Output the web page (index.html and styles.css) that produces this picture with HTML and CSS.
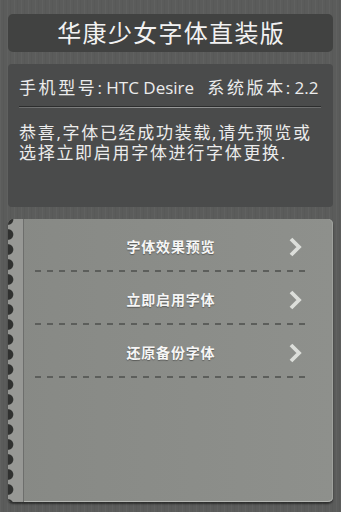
FILE: index.html
```html
<!DOCTYPE html>
<html lang="zh-CN">
<head>
<meta charset="utf-8">
<title>华康少女字体直装版</title>
<link rel="stylesheet" href="styles.css">
</head>
<body>
<div class="screen">
  <header class="title-bar">
    <h1 class="title">华康少女字体直装版</h1>
  </header>
  <section class="info">
    <p class="device"><span class="cj">手机型号</span>: HTC Desire&nbsp;&nbsp;&nbsp;<span class="cj">系统版本</span>: 2.2</p>
    <div class="divider"></div>
    <p class="message">恭喜,字体已经成功装载,请先预览或选择立即启用字体进行字体更换.</p>
  </section>
  <section class="menu">
    <div class="stub"></div>
    <ul class="menu-list">
      <li class="menu-item">
        <span class="label">字体效果预览</span>
        <svg class="chev" viewBox="0 0 12 20" width="12" height="20"><path d="M2 2 L10 10 L2 18"/></svg>
      </li>
      <li class="menu-item">
        <span class="label">立即启用字体</span>
        <svg class="chev" viewBox="0 0 12 20" width="12" height="20"><path d="M2 2 L10 10 L2 18"/></svg>
      </li>
      <li class="menu-item">
        <span class="label">还原备份字体</span>
        <svg class="chev" viewBox="0 0 12 20" width="12" height="20"><path d="M2 2 L10 10 L2 18"/></svg>
      </li>
    </ul>
  </section>
</div>
</body>
</html>
```
FILE: styles.css
```css
html, body {
  margin: 0;
  padding: 0;
}
body {
  background: #5b5c5b;
  font-family: "Open Sans", "Noto Sans CJK SC", sans-serif;
}
.screen {
  width: 341px;
  height: 512px;
  box-sizing: border-box;
  padding: 14px 8px 0 8px;
  display: flex;
  flex-direction: column;
  gap: 12px;
  background:
    repeating-linear-gradient(90deg, rgba(255,255,255,0.03) 0 1px, rgba(0,0,0,0) 1px 3px, rgba(0,0,0,0.035) 3px 4px, rgba(0,0,0,0) 4px 7px),
    #5b5c5b;
}
.title-bar {
  height: 38px;
  background: #414241;
  border-radius: 5px;
  display: flex;
  align-items: center;
  justify-content: center;
  flex: none;
}
.title {
  margin: 0;
  font-size: 24px;
  font-weight: normal;
  letter-spacing: 1.3px;
  padding-left: 1.3px;
  color: #f2f2f2;
  line-height: 30px;
}
.info {
  height: 143px;
  flex: none;
  box-sizing: border-box;
  background: #4a4b4b;
  border-radius: 4px;
  padding: 12px 12px 0 11px;
  color: #ececec;
}
.device {
  margin: 0;
  font-size: 17px;
  line-height: 24px;
  white-space: nowrap;
}
.cj {
  letter-spacing: 2.6px;
}
.divider {
  margin-top: 6px;
  height: 1px;
  background: #2c2d2d;
  border-bottom: 1px solid;
  border-image: linear-gradient(90deg, #6a6b6b, #9a9b9b 50%, #6a6b6b) 1;
}
.message {
  margin: 15px 0 0 0;
  font-size: 17px;
  line-height: 20px;
  letter-spacing: 1.7px;
}
.menu {
  height: 283px;
  flex: none;
  display: flex;
  border-radius: 5px;
  background: linear-gradient(90deg, #878985, #8e908c);
  box-shadow: inset -1px 0 0 #9fa19d, inset 0 -1px 0 #b4b6b2, 0 2px 2px rgba(0,0,0,0.5);
}
.stub {
  width: 15px;
  flex: none;
  border-top-left-radius: 5px;
  border-bottom-left-radius: 3px;
  border-right: 1px solid #6d6e6c;
  background:
    radial-gradient(circle at 0 50%, #303130 0 4.8px, rgba(0,0,0,0) 5.8px) 0 8px / 15px 15px repeat-y,
    #979895;
}
.menu-list {
  list-style: none;
  margin: 0;
  padding: 0 27px 0 11px;
  flex: 1;
}
.menu-item {
  display: grid;
  grid-template-columns: 1fr auto 1fr;
  align-items: center;
  padding: 18px 0 15px 0;
  background: repeating-linear-gradient(90deg, #5c5e5b 0 6px, rgba(0,0,0,0) 6px 12px) left bottom / 100% 2px no-repeat;
}
.label {
  grid-column: 2;
  font-size: 14px;
  line-height: 20px;
  letter-spacing: 0.8px;
  padding-left: 0.8px;
  font-weight: bold;
  color: #f6f6f6;
  text-shadow: 0 1px 1px rgba(0,0,0,0.35);
}
.chev {
  grid-column: 3;
  justify-self: end;
  margin-right: 5px;
  overflow: visible;
}
.chev path {
  fill: none;
  stroke: #dcdeda;
  stroke-width: 3.8;
  stroke-linejoin: miter;
}
```
